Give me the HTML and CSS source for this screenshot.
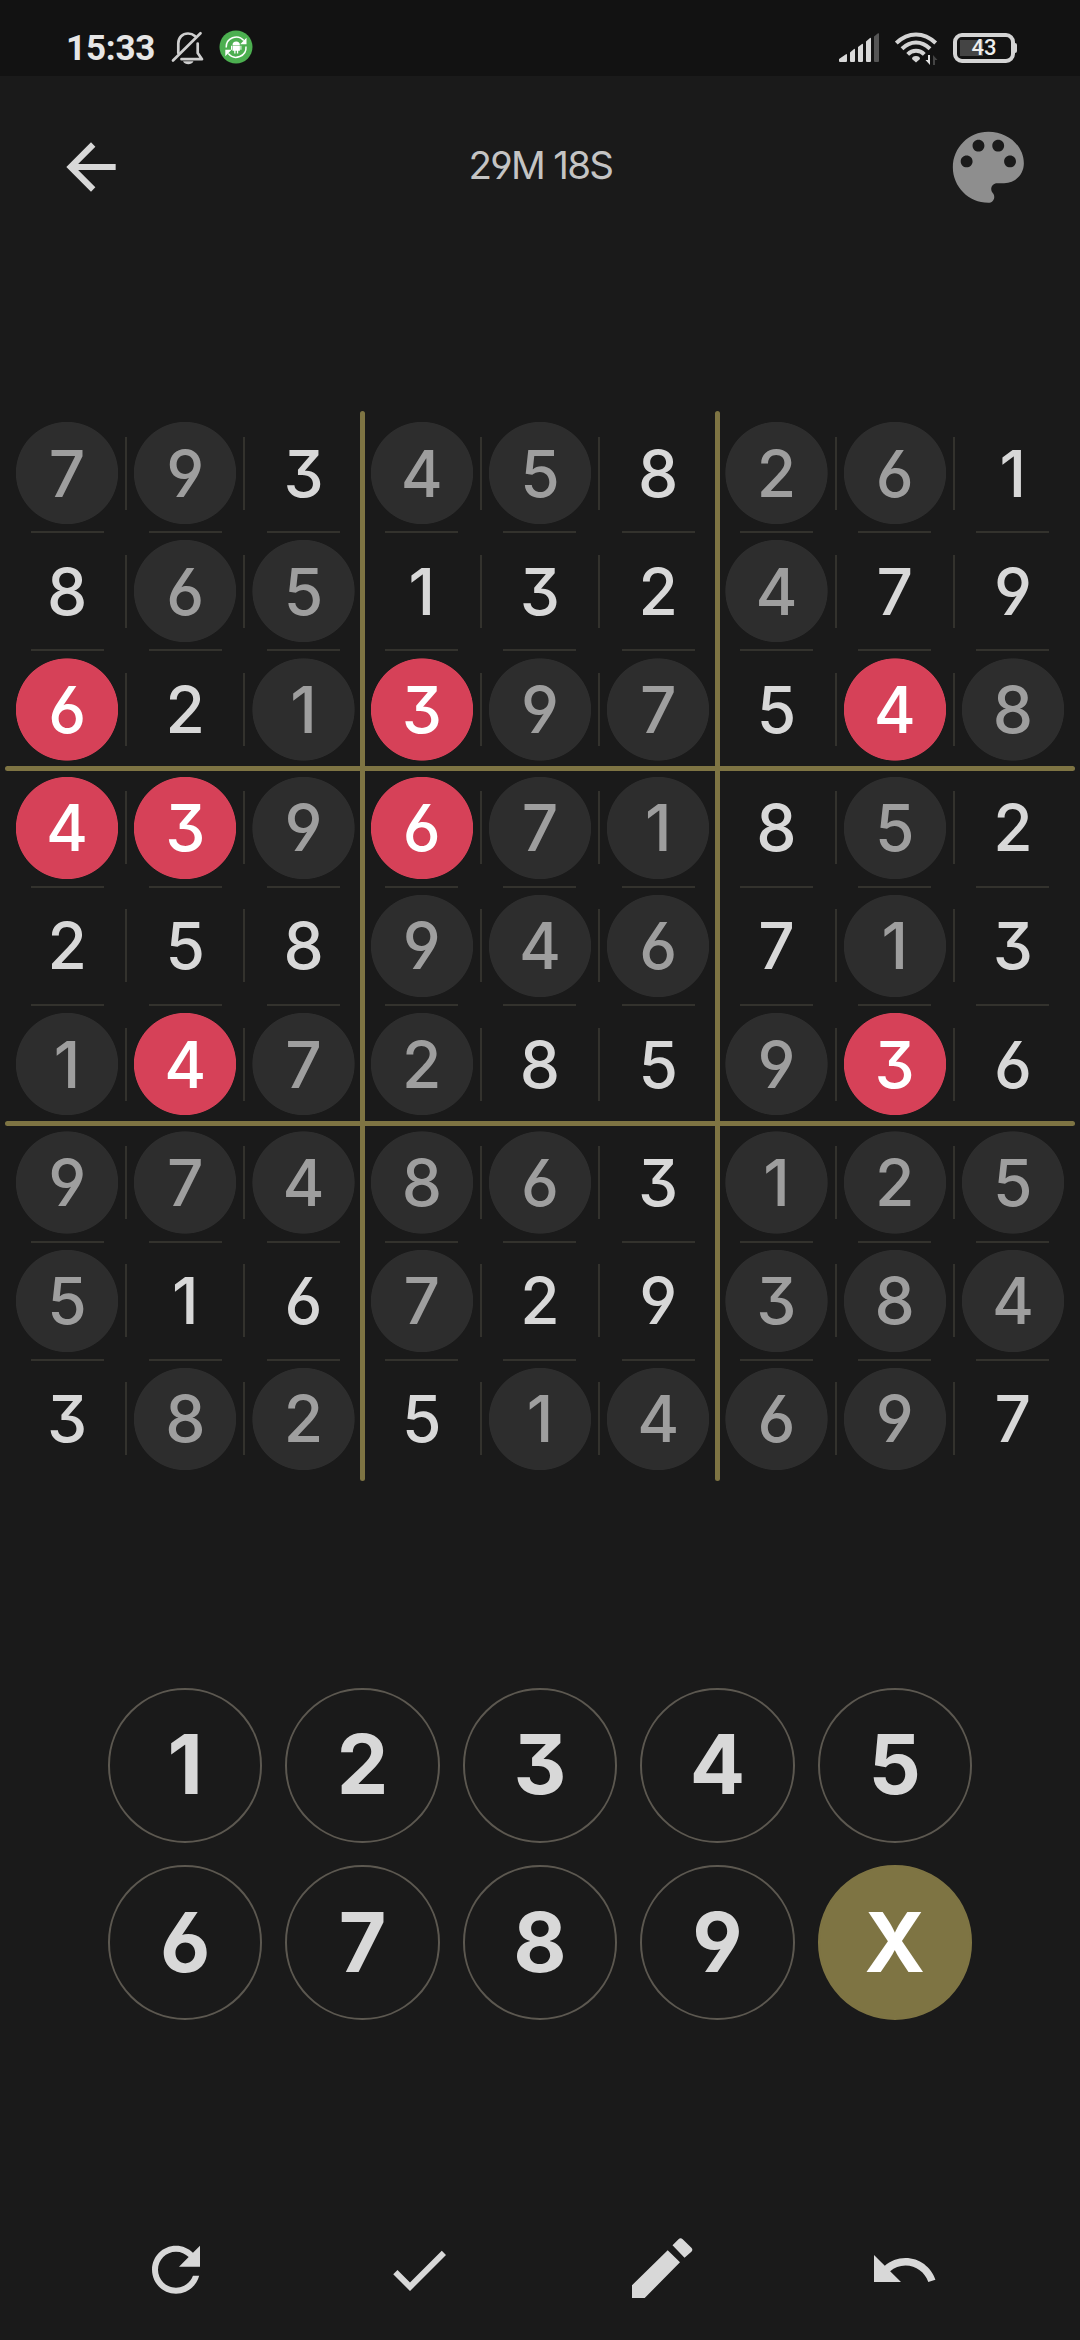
FILE: index.html
```html
<!DOCTYPE html>
<html lang="en">
<head>
<meta charset="utf-8">
<title>Sudoku</title>
<link rel="stylesheet" href="styles.css">
</head>
<body>
<div class="statusbar">
  <div class="status-left">
    <span class="clock">15:33</span>
    <svg class="bell" viewBox="0 0 34 34" fill="none" stroke="#cfcfcf" stroke-width="2.7" stroke-linecap="round" stroke-linejoin="round">
      <path d="M7.300 22V12.500C7.300 6.500 11.500 2.500 17 2.500c2.800 0 5.200 1 6.900 2.600M26.700 12.500V22l4.300 6.200H10.500"/>
      <path d="M2 29.500 29.500 2.300"/>
      <path d="M12 30.300h10.500c-1.200 2.200-3 3-5.200 3s-4.200-.8-5.300-3z" fill="#cfcfcf" stroke="none"/>
    </svg>
    <svg class="sync" viewBox="0 0 34 34">
      <circle cx="17" cy="17" r="16.500" fill="#4caf50"/>
      <g fill="none" stroke="#fff" stroke-width="1.500">
        <path d="M7.200 17.500A10 10 0 0 1 24.800 10.600"/>
        <path d="M27 16.500A10 10 0 0 1 9.300 23.600"/>
      </g>
      <path d="M27.500 7.800v6.400h-6.300zM6.300 26.200v-6.400h6.300z" fill="#fff"/>
      <path d="M13.500 15.300a3.700 3.700 0 0 1 7.400 0zM13.500 15.800h7.400v5h-1.700v2.700h-1.300v-2.700h-1.400v2.700h-1.300v-2.700h-1.700zM12 15.800h1v4h-1zM21.400 15.800h1v4h-1z" fill="#fff"/>
    </svg>
  </div>
  <div class="status-right">
    <svg class="signal" viewBox="0 0 40 30" fill="#d4d4d4">
      <path d="M0 29v-3l7-4.800q1-.4 1 .8v6q0 1-1 1H1q-1 0-1-1z"/>
      <path d="M11 28V19.500L15 16q1-.5 1 .8V28q0 1-1 1h-3q-1 0-1-1z"/>
      <path d="M19 28V14l4-3q1-.5 1 .8V28q0 1-1 1h-3q-1 0-1-1z"/>
      <path d="M27 28V8.500L31 5q1-.5 1 .8V28q0 1-1 1h-3q-1 0-1-1z"/>
      <path d="M35 28V3.500L39 .3q1-.5 1 .8V28q0 1-1 1h-3q-1 0-1-1z" fill="#555"/>
    </svg>
    <svg class="wifi" viewBox="0 0 44 34">
      <g fill="none" stroke="#d4d4d4" stroke-width="4">
        <path d="M1.300 11C7 5.500 13.500 2.400 21 2.400S35 5.500 40.700 11"/>
        <path d="M7 16.700C11 12.800 15.500 10.500 21 10.500s10 2.300 14 6.200"/>
        <path d="M12.700 22.300c2.300-2.300 5-3.500 8.300-3.500s6 1.200 8.300 3.500"/>
      </g>
      <path d="M17 27q0-3 4-3t4 3l-4 3.600z" fill="#d4d4d4"/>
      <path d="M35 23v10l-4.500-5H33v-5z" fill="#e2e2e2"/>
      <path d="M38 33V23l4.500 5H40v5z" fill="#444"/>
    </svg>
    <div class="battery"><span>43</span></div>
  </div>
</div>

<header class="header">
  <svg class="back" viewBox="0 0 24 24"><path d="M20 11H7.830l5.590-5.590L12 4l-8 8 8 8 1.410-1.410L7.830 13H20z"/></svg>
  <h1 class="timer">29M 18S</h1>
  <svg class="palette" viewBox="0 0 24 24"><path d="M12 3c-4.970 0-9 4.030-9 9s4.030 9 9 9c.83 0 1.500-.67 1.500-1.500 0-.39-.15-.74-.39-1.010-.23-.26-.38-.61-.38-.99 0-.83.67-1.500 1.500-1.500H16c2.760 0 5-2.240 5-5 0-4.420-4.030-8-9-8zm-5.500 9c-.83 0-1.500-.67-1.500-1.500S5.670 9 6.500 9 8 9.670 8 10.500 7.330 12 6.500 12zm3-4C8.670 8 8 7.330 8 6.500S8.670 5 9.500 5s1.500.67 1.500 1.500S10.330 8 9.500 8zm5 0c-.83 0-1.500-.67-1.500-1.500S13.670 5 14.500 5s1.500.67 1.500 1.500S15.330 8 14.500 8zm3 4c-.83 0-1.500-.67-1.500-1.500S16.670 9 17.500 9s1.500.67 1.500 1.500-.67 1.500-1.500 1.500z"/></svg>
</header>

<main>
  <div class="board">
    <div class="row"><b class="given">7</b><b class="given">9</b><b>3</b><b class="given">4</b><b class="given">5</b><b>8</b><b class="given">2</b><b class="given">6</b><b>1</b></div>
    <div class="row"><b>8</b><b class="given">6</b><b class="given">5</b><b>1</b><b>3</b><b>2</b><b class="given">4</b><b>7</b><b>9</b></div>
    <div class="row"><b class="error">6</b><b>2</b><b class="given">1</b><b class="error">3</b><b class="given">9</b><b class="given">7</b><b>5</b><b class="error">4</b><b class="given">8</b></div>
    <div class="row"><b class="error">4</b><b class="error">3</b><b class="given">9</b><b class="error">6</b><b class="given">7</b><b class="given">1</b><b>8</b><b class="given">5</b><b>2</b></div>
    <div class="row"><b>2</b><b>5</b><b>8</b><b class="given">9</b><b class="given">4</b><b class="given">6</b><b>7</b><b class="given">1</b><b>3</b></div>
    <div class="row"><b class="given">1</b><b class="error">4</b><b class="given">7</b><b class="given">2</b><b>8</b><b>5</b><b class="given">9</b><b class="error">3</b><b>6</b></div>
    <div class="row"><b class="given">9</b><b class="given">7</b><b class="given">4</b><b class="given">8</b><b class="given">6</b><b>3</b><b class="given">1</b><b class="given">2</b><b class="given">5</b></div>
    <div class="row"><b class="given">5</b><b>1</b><b>6</b><b class="given">7</b><b>2</b><b>9</b><b class="given">3</b><b class="given">8</b><b class="given">4</b></div>
    <div class="row"><b>3</b><b class="given">8</b><b class="given">2</b><b>5</b><b class="given">1</b><b class="given">4</b><b class="given">6</b><b class="given">9</b><b>7</b></div>
    <i class="rule rule-v first"></i><i class="rule rule-v second"></i>
    <i class="rule rule-h first"></i><i class="rule rule-h second"></i>
  </div>

  <div class="keypad">
    <button>1</button><button>2</button><button>3</button><button>4</button><button>5</button>
    <button>6</button><button>7</button><button>8</button><button>9</button><button class="clear">X</button>
  </div>
</main>

<nav class="toolbar">
  <svg viewBox="0 0 24 24"><path d="M17.650 6.350C16.200 4.900 14.210 4 12 4c-4.420 0-7.990 3.580-7.990 8s3.570 8 7.990 8c3.730 0 6.840-2.550 7.730-6h-2.080c-.82 2.330-3.040 4-5.650 4-3.310 0-6-2.690-6-6s2.690-6 6-6c1.660 0 3.140.69 4.220 1.780L13 11h7V4l-2.350 2.350z" transform="translate(0 -.1)"/></svg>
  <svg viewBox="0 0 24 24"><path d="M9 16.170L4.830 12l-1.420 1.410L9 19 21 7l-1.410-1.410z"/></svg>
  <svg viewBox="0 0 72 72"><path d="M7 51.300 42.700 16.200 55 28.300 19.700 64H7zM47.500 11.300 53.500 5.200Q55.500 3.200 57.700 5.200L66.400 13.800Q68.300 15.800 66.400 17.800L59.500 23.700z"/></svg>
  <svg viewBox="0 0 24 24"><path d="M12.500 8c-2.650 0-5.050.99-6.900 2.600L2 7v9h9l-3.620-3.620c1.390-1.160 3.160-1.880 5.120-1.880 3.540 0 6.550 2.310 7.600 5.500l2.370-.78C21.080 11.030 17.150 8 12.500 8z"/></svg>
</nav>
</body>
</html>
```

FILE: styles.css
```css
* { box-sizing: border-box; }

body {
  margin: 0;
  width: 1080px;
  height: 2340px;
  overflow: hidden;
  display: flex;
  flex-direction: column;
  background: #1a1a1a;
  color: #d8d8d8;
  font-family: Inter, "Liberation Sans", sans-serif;
  font-feature-settings: "cv03", "cv04", "cv09";
}

svg { display: block; flex: none; fill: #d8d8d8; }

/* Status bar */
.statusbar {
  height: 76px;
  padding: 31px 65px 0 66px;
  display: flex;
  justify-content: space-between;
  align-items: flex-start;
  background: #121212;
}
.status-left, .status-right { display: flex; align-items: flex-start; }
.clock {
  width: 105px;
  font: 700 35px/34px Roboto, sans-serif;
  letter-spacing: -0.200px;
  color: #e6e6e6;
  padding-top: 1px;
}
.bell { width: 34px; height: 34px; fill: none; }
.sync { width: 34px; height: 34px; margin: -1px 0 0 14px; }
.signal { width: 40px; height: 30px; margin-top: 2px; }
.wifi { width: 44px; height: 34px; margin: 1px 0 0 16px; }
.battery {
  position: relative;
  width: 62px;
  height: 30px;
  margin: 2px 0 0 14px;
  border: 4px solid #d4d4d4;
  border-radius: 9px;
  display: flex;
  align-items: center;
  justify-content: center;
  background: linear-gradient(#444, #444) 3px 3px / 23px 16px no-repeat;
  font: 500 22px/22px Roboto, sans-serif;
  color: #eee;
}
.battery::after {
  content: "";
  position: absolute;
  left: 56px;
  top: 6px;
  width: 4px;
  height: 10px;
  border-radius: 2px;
  background: #d4d4d4;
}

/* Header */
.header {
  height: 182px;
  padding: 0 44.500px 0 54.300px;
  display: grid;
  grid-template-columns: 95px 1fr 95px;
  align-items: center;
}
.back { width: 74px; height: 74px; }
.timer {
  margin: 0 9px 0 0;
  text-align: center;
  font-size: 38.500px;
  line-height: 48px;
  font-weight: 400;
  letter-spacing: -1.700px;
  padding-bottom: 5px;
  color: #c4c4c4;
}
.palette { width: 94.700px; height: 94.700px; fill: #8e8e8e; }

/* Board */
.board {
  position: relative;
  width: 1064px;
  height: 1064px;
  margin: 156px auto 0;
  display: grid;
  grid-template-rows: repeat(9, 1fr);
}
.row { display: grid; grid-template-columns: repeat(9, 1fr); }
.row b {
  position: relative;
  display: flex;
  align-items: center;
  justify-content: center;
  font-size: 64px;
  font-weight: 450;
  z-index: 0;
}
.row .given { color: #9e9e9e; }
.row .error { color: #fff; font-weight: 500; }
.row .given, .row .error {
  background: radial-gradient(circle, var(--disc) 50.700px, transparent 51.500px);
}
.row .given { --disc: #2d2d2d; }
.row .error { --disc: #d64158; }
.row b:not(:nth-child(3n))::before {
  content: "";
  position: absolute;
  right: -1px;
  top: 22.600px;
  width: 2px;
  height: 73px;
  background: #33322d;
}
.row:not(:nth-child(3n)) b::after {
  content: "";
  position: absolute;
  bottom: -1px;
  left: 22.600px;
  width: 73px;
  height: 2px;
  background: #33322d;
}
.rule { position: absolute; border-radius: 3px; background: #7e7443; }
.rule-v { top: -3px; width: 5px; height: 1070px; }
.rule-h { left: -3px; height: 5px; width: 1070px; }
.rule-v.first { left: 352px; }
.rule-v.second { left: 707px; }
.rule-h.first { top: 352px; }
.rule-h.second { top: 707px; }

/* Keypad */
.keypad {
  margin: 210px auto 0;
  display: grid;
  grid-template-columns: repeat(5, 154.500px);
  grid-auto-rows: 154.500px;
  gap: 22.900px;
  justify-content: center;
}
.keypad button {
  padding: 0;
  border: 2px solid #5c5850;
  border-radius: 50%;
  background: none;
  color: #d8d8d8;
  font: inherit;
  font-feature-settings: inherit;
  font-size: 82px;
  line-height: 82px;
  font-weight: 650;
}
.keypad .clear { background: #7e7443; border-color: #7e7443; color: #fff; }

/* Toolbar */
.toolbar {
  width: 970px;
  height: 106px;
  margin: auto auto 0;
  display: grid;
  grid-template-columns: repeat(4, 1fr);
  justify-items: center;
}
.toolbar svg { width: 72px; height: 72px; }
```
